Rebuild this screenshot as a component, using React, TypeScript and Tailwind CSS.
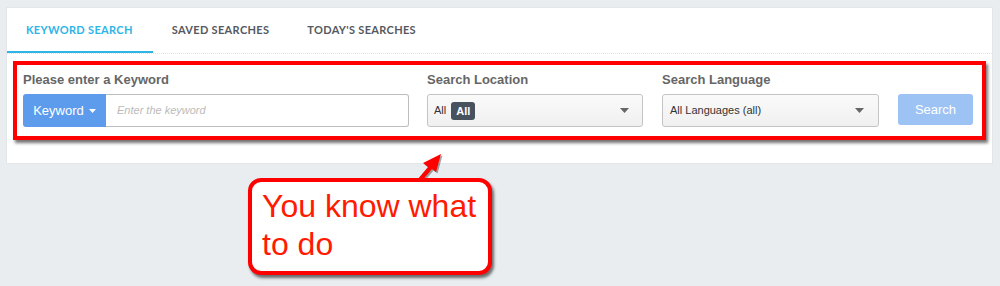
import React from "react";

const TABS = ["Keyword Search", "Saved Searches", "Today's Searches"];

function Caret() {
  return (
    <svg width="9" height="5" viewBox="0 0 9 5" className="shrink-0">
      <path d="M0 0 L9 0 L4.5 5 Z" fill="#666" />
    </svg>
  );
}

export default function App() {
  return (
    <div
      className="relative w-[1000px] h-[286px] bg-[#e9edf0] pt-[7px] pl-[6px]"
      style={{ fontFamily: "'Liberation Sans', Arial, sans-serif" }}
    >
      {/* Card */}
      <div className="w-[987px] h-[157px] bg-white border border-[#e3e6e9]">
        {/* Tabs */}
        <div className="flex h-[46px] border-b border-dotted border-[#e1e4e7]">
          {TABS.map((tab, i) => (
            <div
              key={tab}
              className={`flex items-center px-[19px] pt-[1px] text-[11px] font-bold uppercase tracking-[0.03em] ${
                i === 0
                  ? "text-[#2cb5e8] border-b-2 border-[#2cb5e8] pr-[20px]"
                  : "text-[#55595f] border-b-2 border-transparent"
              }`}
              style={{ fontFamily: "Lato, 'Open Sans', sans-serif" }}
            >
              {tab}
            </div>
          ))}
        </div>

        {/* Highlighted form */}
        <div className="px-[6px] pt-[7px]">
          <div className="border-4 border-[#ff0000] shadow-[2px_3px_3px_rgba(0,0,0,0.55)] pl-[6px] pr-[8px] pt-[6px] pb-[9px] flex items-end gap-[18px]">
            <div className="w-[386px]">
              <div className="text-[13px] font-bold text-[#666] h-[18px] leading-[18px] mb-[5px]">
                Please enter a Keyword
              </div>
              <div className="flex h-[33px]">
                <div className="w-[83px] bg-[#5d9cec] text-white text-[13px] flex items-center justify-center gap-[5px] rounded-l-[3px]">
                  Keyword
                  <svg width="7" height="4" viewBox="0 0 7 4">
                    <path d="M0 0 L7 0 L3.5 4 Z" fill="#fff" />
                  </svg>
                </div>
                <div className="flex-1 border border-[#bdbdbd] border-l-0 rounded-r-[3px] flex items-center pl-[11px] text-[11px] italic text-[#bbb]">
                  Enter the keyword
                </div>
              </div>
            </div>

            <div className="w-[216px]">
              <div className="text-[13px] font-bold text-[#666] h-[18px] leading-[18px] mb-[5px]">
                Search Location
              </div>
              <div className="h-[33px] border border-[#c4c4c4] rounded-[3px] bg-gradient-to-b from-[#fafafa] to-[#f0f0f0] flex items-center pl-[6px] pr-[13px]">
                <span className="text-[11px] text-[#333]">All</span>
                <span className="ml-[5px] bg-[#48525e] text-white text-[11px] font-bold rounded-[3px] px-[5px] h-[18px] leading-[18px]">
                  All
                </span>
                <span className="flex-1" />
                <Caret />
              </div>
            </div>

            <div className="w-[217px] ml-[1px]">
              <div className="text-[13px] font-bold text-[#666] h-[18px] leading-[18px] mb-[5px]">
                Search Language
              </div>
              <div className="h-[33px] border border-[#c4c4c4] rounded-[3px] bg-gradient-to-b from-[#fafafa] to-[#f0f0f0] flex items-center pl-[7px] pr-[14px]">
                <span className="text-[11px] text-[#333]">All Languages (all)</span>
                <span className="flex-1" />
                <Caret />
              </div>
            </div>

            <div className="ml-[1px] mb-[2px] w-[75px] h-[31px] bg-[#9cc3f4] rounded-[3px] text-white text-[13px] flex items-center justify-center">
              Search
            </div>
          </div>
        </div>
      </div>

      {/* Arrow annotation */}
      <svg
        className="absolute left-[408px] top-[148px]"
        width="42"
        height="38"
        viewBox="0 0 42 38"
      >
        <g transform="translate(1.5,1.5)" fill="rgba(0,0,0,0.35)">
          <path d="M9 32 L20 19 L15 15 L33 6 L28 24 L24 21 L13 34 Z" />
        </g>
        <path d="M9 32 L20 19 L15 15 L33 6 L28 24 L24 21 L13 34 Z" fill="#ff0000" />
      </svg>

      {/* Callout */}
      <div className="absolute left-[248px] top-[178px] w-[244px] h-[97px] border-4 border-[#ff0000] rounded-[13px] bg-white shadow-[2px_3px_3px_rgba(0,0,0,0.55)] pl-[10px] pt-[5px]">
        <div className="text-[32px] leading-[38px] text-[#ff1a00]">
          You know what
          <br />
          to do
        </div>
      </div>
    </div>
  );
}
